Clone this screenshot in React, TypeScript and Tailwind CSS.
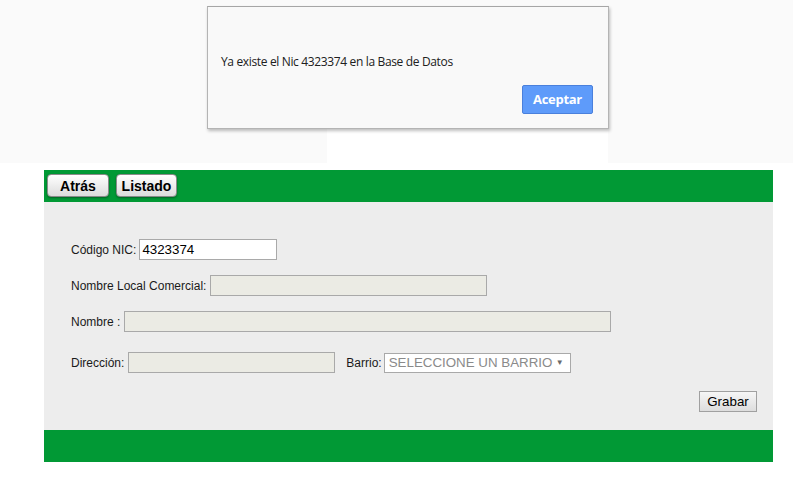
import React from 'react';

const labelCls = "text-[12px] text-[#1a1a1a] whitespace-nowrap";
const disabledInput = "h-[21px] border border-[#a9a9a9] bg-[#ebebe4]";

export default function App() {
  return (
    <div className="relative w-[793px] h-[491px] bg-white overflow-hidden" style={{ fontFamily: '"Liberation Sans", Arial, sans-serif' }}>
      {/* Top band behind the alert */}
      <div className="h-[163px] bg-[#fafafa]" />

      {/* Alert overlay */}
      <div className="absolute left-[327px] top-[128px] w-[281px] h-[35px] bg-white" />
      <div className="absolute left-[207px] top-[6px] w-[402px] h-[123px] bg-[#f9f9f9] border border-[#b4b4b4] border-t-[#a6a6a6] shadow-[1px_2px_3px_rgba(0,0,0,0.25)]">
        <p className="absolute left-[13px] top-[46px] text-[12px] text-[#202020]" style={{ fontFamily: '"Open Sans", "Noto Sans", sans-serif', letterSpacing: '-0.35px' }}>
          Ya existe el Nic 4323374 en la Base de Datos
        </p>
        <button className="absolute left-[314px] top-[78px] w-[71px] h-[29px] rounded-[2px] bg-[#5e9bfa] border border-[#4a80dc] text-white text-[13px] font-bold" style={{ fontFamily: '"Open Sans", "Noto Sans", sans-serif', letterSpacing: '-0.3px' }}>
          Aceptar
        </button>
      </div>

      {/* Main form */}
      <div className="ml-[44px] mt-[7px] w-[729px]">
        <div className="h-[32px] bg-[#019935] flex items-start gap-[7px] pl-[3px] pt-[4px]">
          <button className="w-[62px] h-[23px] rounded-[4px] border border-[#8a8a8a] bg-gradient-to-b from-white to-[#dcdcdc] shadow-[0_1px_2px_rgba(0,0,0,0.35)] text-[14px] font-bold text-black leading-none">
            Atrás
          </button>
          <button className="w-[61px] h-[23px] rounded-[4px] border border-[#8a8a8a] bg-gradient-to-b from-white to-[#dcdcdc] shadow-[0_1px_2px_rgba(0,0,0,0.35)] text-[14px] font-bold text-black leading-none">
            Listado
          </button>
        </div>

        <div className="h-[228px] bg-[#ededed] pl-[27px] pt-[37px]">
          <div className="flex items-center gap-[3px] h-[21px]">
            <span className={labelCls}>Código NIC:</span>
            <div className="w-[138px] h-[21px] border border-[#a9a9a9] bg-white text-[13.33px] text-black pl-[2px] leading-[19px]">4323374</div>
          </div>
          <div className="flex items-center gap-[4px] h-[21px] mt-[15px]">
            <span className={labelCls}>Nombre Local Comercial:</span>
            <div className={`w-[277px] ${disabledInput}`} />
          </div>
          <div className="flex items-center gap-[4px] h-[21px] mt-[15px]">
            <span className={labelCls}>Nombre :</span>
            <div className={`w-[487px] ${disabledInput}`} />
          </div>
          <div className="flex items-center h-[21px] mt-[20px]">
            <span className={labelCls}>Dirección:</span>
            <div className={`ml-[4px] w-[207px] ${disabledInput}`} />
            <span className={`ml-[11px] ${labelCls}`}>Barrio:</span>
            <div className="ml-[2px] w-[187px] h-[20px] border border-[#a9a9a9] bg-white flex items-center pl-[4px] pr-[6px] text-[13.33px] text-[#8a8a8a]">
              <span className="flex-1">SELECCIONE UN BARRIO</span>
              <span className="text-[8px] text-[#6a6a6a]">▼</span>
            </div>
          </div>
          <div className="flex justify-end pr-[16px] mt-[18px]">
            <button className="w-[58px] h-[21px] border border-[#a0a0a0] bg-gradient-to-b from-[#f6f6f6] to-[#dddddd] text-[13.33px] text-black leading-none">
              Grabar
            </button>
          </div>
        </div>

        <div className="h-[32px] bg-[#019935]" />
      </div>
    </div>
  );
}
